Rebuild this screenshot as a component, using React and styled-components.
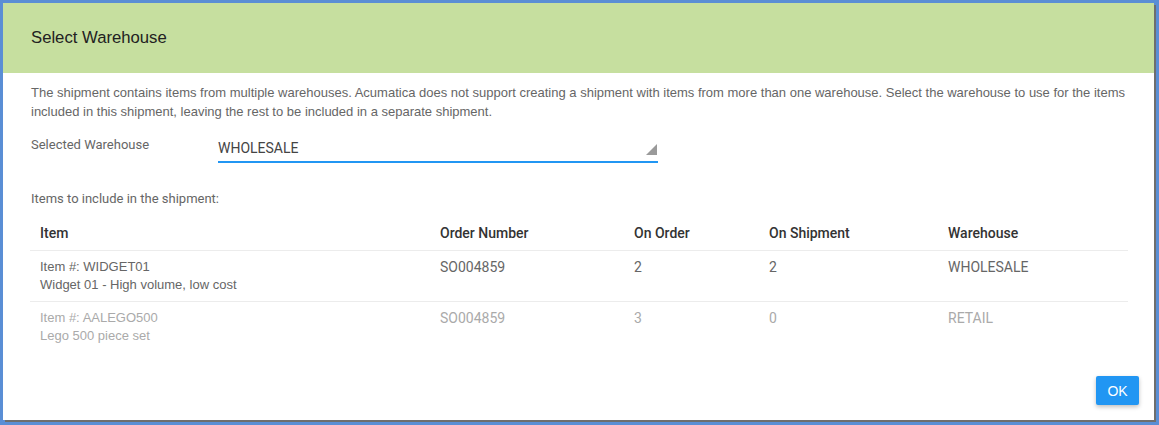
import React from "react";
import styled, { createGlobalStyle } from "styled-components";

const Global = createGlobalStyle`
  html, body { margin: 0; padding: 0; background: #5a8ed5; }
  body { width: 1159px; height: 425px; overflow: hidden; font-family: "Liberation Sans", Arial, sans-serif; }
`;

const Screen = styled.div`
  width: 1159px;
  height: 425px;
  padding: 3px 0 0 3px;
  box-sizing: border-box;
`;

const Dialog = styled.div`
  width: 1151px;
  height: 417px;
  background: #fff;
  box-shadow: 2px 2px 0 #6e6e6e;
  display: flex;
  flex-direction: column;
  box-sizing: border-box;
`;

const Header = styled.div`
  height: 70px;
  background: #c6df9f;
  display: flex;
  align-items: center;
  padding-left: 28px;
  flex-shrink: 0;
`;

const Title = styled.h1`
  margin: 0;
  font-family: "Liberation Sans", Arial, sans-serif;
  font-size: 16.7px;
  font-weight: 400;
  color: #222;
  line-height: 20px;
`;

const Body = styled.div`
  flex: 1;
  display: flex;
  flex-direction: column;
  padding: 10px 26px 15px 28px;
`;

const Description = styled.p`
  margin: 0;
  font-family: "Liberation Sans", Arial, sans-serif;
  font-size: 13px;
  line-height: 19px;
  color: #666;
`;

const FormRow = styled.div`
  display: flex;
  align-items: flex-start;
  margin-top: 12px;
`;

const Label = styled.div`
  width: 187px;
  font-family: Roboto, sans-serif;
  font-size: 13px;
  line-height: 18px;
  color: #666;
  padding-top: 3px;
`;

const Select = styled.div`
  width: 440px;
  height: 30px;
  box-sizing: border-box;
  border-bottom: 2px solid #2196f3;
  display: flex;
  align-items: center;
  justify-content: space-between;
  padding-top: 2px;
`;

const SelectValue = styled.span`
  font-family: Roboto, sans-serif;
  font-size: 14px;
  color: #444;
`;

const Arrow = styled.span`
  width: 0;
  height: 0;
  border-left: 11px solid transparent;
  border-bottom: 11px solid #9a9a9a;
  margin-right: 1px;
  margin-top: 2px;
`;

const SectionLabel = styled.div`
  margin-top: 27px;
  font-family: Roboto, sans-serif;
  font-size: 13px;
  line-height: 18px;
  color: #666;
`;

const Table = styled.div`
  margin-top: 8px;
  width: 1098px;
  margin-left: -1px;
`;

const Row = styled.div`
  display: grid;
  grid-template-columns: 400px 194px 135px 179px 1fr;
  border-bottom: ${(p) => (p.$last ? "none" : "1px solid #ececec")};
  padding: ${(p) => (p.$head ? "8px 0" : "7px 0")};
`;

const HeadCell = styled.div`
  padding-left: 10px;
  font-family: Roboto, sans-serif;
  font-weight: 500;
  font-size: 14px;
  line-height: 18px;
  color: #333;
`;

const Cell = styled.div`
  padding-left: 10px;
  font-family: ${(p) => (p.$item ? '"Liberation Sans", Arial, sans-serif' : "Roboto, sans-serif")};
  font-size: ${(p) => (p.$item ? "13px" : "14px")};
  line-height: 18px;
  color: ${(p) => (p.$disabled ? "#aaa" : "#666")};
`;

const Footer = styled.div`
  margin-top: auto;
  display: flex;
  justify-content: flex-end;
`;

const OkButton = styled.button`
  width: 43px;
  height: 29px;
  border: none;
  border-radius: 2px;
  background: #2196f3;
  color: #fff;
  font-family: "Liberation Sans", Arial, sans-serif;
  font-size: 14px;
  box-shadow: 0 2px 4px rgba(0, 0, 0, 0.25);
  margin-right: -11px;
  padding: 0;
`;

const rows = [
  { item: "Item #: WIDGET01", desc: "Widget 01 - High volume, low cost", order: "SO004859", onOrder: "2", onShip: "2", wh: "WHOLESALE", disabled: false },
  { item: "Item #: AALEGO500", desc: "Lego 500 piece set", order: "SO004859", onOrder: "3", onShip: "0", wh: "RETAIL", disabled: true },
];

export default function App() {
  return (
    <>
      <Global />
      <Screen>
        <Dialog>
          <Header>
            <Title>Select Warehouse</Title>
          </Header>
          <Body>
            <Description>
              The shipment contains items from multiple warehouses. Acumatica does not support creating a shipment with items from more than one warehouse. Select the warehouse to use for the items included in this shipment, leaving the rest to be included in a separate shipment.
            </Description>
            <FormRow>
              <Label>Selected Warehouse</Label>
              <Select>
                <SelectValue>WHOLESALE</SelectValue>
                <Arrow />
              </Select>
            </FormRow>
            <SectionLabel>Items to include in the shipment:</SectionLabel>
            <Table>
              <Row $head>
                <HeadCell>Item</HeadCell>
                <HeadCell>Order Number</HeadCell>
                <HeadCell>On Order</HeadCell>
                <HeadCell>On Shipment</HeadCell>
                <HeadCell>Warehouse</HeadCell>
              </Row>
              {rows.map((r, i) => (
                <Row key={r.item} $last={i === rows.length - 1}>
                  <Cell $item $disabled={r.disabled}>
                    {r.item}
                    <br />
                    {r.desc}
                  </Cell>
                  <Cell $disabled={r.disabled}>{r.order}</Cell>
                  <Cell $disabled={r.disabled}>{r.onOrder}</Cell>
                  <Cell $disabled={r.disabled}>{r.onShip}</Cell>
                  <Cell $disabled={r.disabled}>{r.wh}</Cell>
                </Row>
              ))}
            </Table>
            <Footer>
              <OkButton>OK</OkButton>
            </Footer>
          </Body>
        </Dialog>
      </Screen>
    </>
  );
}
